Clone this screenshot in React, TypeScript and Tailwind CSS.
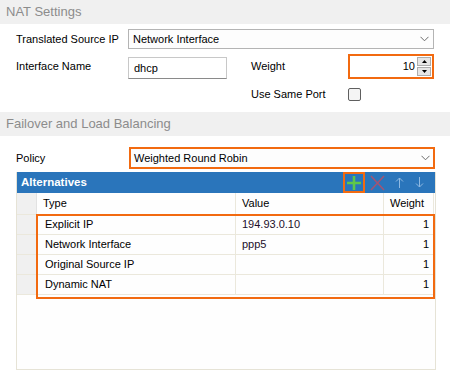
import React from "react";

const rows = [
  { type: "Explicit IP", value: "194.93.0.10", weight: "1" },
  { type: "Network Interface", value: "ppp5", weight: "1" },
  { type: "Original Source IP", value: "", weight: "1" },
  { type: "Dynamic NAT", value: "", weight: "1" },
];

function Chevron() {
  return (
    <svg width="9" height="6" viewBox="0 0 9 6" className="shrink-0">
      <path d="M0.5 0.8 L4.5 4.8 L8.5 0.8" fill="none" stroke="#6b6b6b" strokeWidth="1" />
    </svg>
  );
}

function SectionHeader({ title }: { title: string }) {
  return (
    <div className="h-[24px] bg-[#f0f0f0] flex items-center pl-[6px] text-[13px] text-[#8c8c8c]">
      {title}
    </div>
  );
}

export default function App() {
  return (
    <div
      className="w-[450px] h-[374px] bg-white overflow-hidden text-[11px] text-black"
      style={{ fontFamily: '"Liberation Sans", Arial, sans-serif' }}
    >
      <SectionHeader title="NAT Settings" />

      {/* Translated source */}
      <div className="flex items-center h-[20px] mt-[5px]">
        <div className="w-[128px] pl-[16px]">Translated Source IP</div>
        <div className="w-[306px] h-[20px] border border-[#b4b4b4] bg-[#fdfdfd] flex items-center justify-between pl-[4px] pr-[4px]">
          <span>Network Interface</span>
          <Chevron />
        </div>
      </div>

      {/* Interface name + weight */}
      <div className="flex items-center h-[25px] mt-[5px]">
        <div className="w-[128px] pl-[16px]">Interface Name</div>
        <div className="w-[99px] h-[22px] border border-[#c8c8c8] border-b-[#8a8a8a] bg-white flex items-center pl-[5px] mt-[3px]">
          dhcp
        </div>
        <div className="w-[121px] pl-[24px]">Weight</div>
        <div className="w-[86px] h-[25px] border-2 border-[#f26a10] bg-white flex items-center justify-end pr-[1px]">
          <span className="mr-[2px]">10</span>
          <div className="flex flex-col gap-[1px]">
            <div className="w-[14px] h-[9px] bg-[#e6e6e6] border border-[#adadad] flex items-center justify-center">
              <svg width="5" height="3" viewBox="0 0 5 3"><path d="M2.5 0 L5 3 L0 3 Z" fill="#000" /></svg>
            </div>
            <div className="w-[14px] h-[9px] bg-[#e6e6e6] border border-[#adadad] flex items-center justify-center">
              <svg width="5" height="3" viewBox="0 0 5 3"><path d="M0 0 L5 0 L2.5 3 Z" fill="#000" /></svg>
            </div>
          </div>
        </div>
      </div>

      {/* Use same port */}
      <div className="flex items-center h-[14px] mt-[8px]">
        <div className="w-[251px]" />
        <div className="w-[97px]">Use Same Port</div>
        <div className="w-[13px] h-[13px] rounded-[2px] border border-[#5f5f5f] bg-[#f4f4f4]" />
      </div>

      <div className="h-[11px]" />
      <SectionHeader title="Failover and Load Balancing" />

      {/* Policy */}
      <div className="flex items-center h-[22px] mt-[11px]">
        <div className="w-[129px] pl-[16px]">Policy</div>
        <div className="w-[306px] h-[22px] border-2 border-[#f26a10] bg-[#fdfdfd] flex items-center justify-between pl-[3px] pr-[3px]">
          <span>Weighted Round Robin</span>
          <Chevron />
        </div>
      </div>

      {/* Alternatives panel */}
      <div className="ml-[16px] w-[420px] h-[198px] mt-[3px] border border-[#e6e3d6] border-t-0 flex flex-col">
        <div className="h-[21px] bg-[#2a75bb] flex items-center justify-between pl-[4px] pr-[6px]">
          <span className="text-white font-bold text-[11.5px]">Alternatives</span>
          <div className="flex items-center h-full">
            <div className="w-[22px] h-[21px] border-2 border-[#f26a10] flex items-center justify-center">
              <svg width="16" height="16" viewBox="0 0 16 16">
                <path d="M8 1 V15 M1 8 H15" stroke="#5fc748" strokeWidth="2.6" />
              </svg>
            </div>
            <div className="w-[24px] flex items-center justify-center">
              <svg width="17" height="16" viewBox="0 0 17 16">
                <path d="M2 1 L15 15 M15 1 L2 15" stroke="#c94a5c" strokeOpacity="0.75" strokeWidth="1.6" />
              </svg>
            </div>
            <div className="w-[20px] flex items-center justify-center">
              <svg width="9" height="11" viewBox="0 0 9 11">
                <path d="M4.5 1 V11 M1 4.5 L4.5 1 L8 4.5" fill="none" stroke="#8fb9e2" strokeWidth="1" />
              </svg>
            </div>
            <div className="w-[20px] flex items-center justify-center">
              <svg width="9" height="11" viewBox="0 0 9 11">
                <path d="M4.5 0 V10 M1 6.5 L4.5 10 L8 6.5" fill="none" stroke="#8fb9e2" strokeWidth="1" />
              </svg>
            </div>
          </div>
        </div>

        <div className="relative flex-1 bg-[#fefefe]">
          {/* header row */}
          <div className="flex h-[22px] border-b border-[#ebe8dc]">
            <div className="w-[20px] bg-[#f0f0f0] border-r border-[#e2e2e2]" />
            <div className="w-[199px] pl-[6px] flex items-center border-r border-[#ebe8dc]">Type</div>
            <div className="w-[148px] pl-[6px] flex items-center border-r border-[#ebe8dc]">Value</div>
            <div className="w-[50px] pl-[6px] flex items-center border-r border-[#ebe8dc]">Weight</div>
          </div>
          {rows.map((r) => (
            <div key={r.type} className="flex h-[20px] border-b border-[#ebe8dc]">
              <div className="w-[20px] bg-[#f0f0f0] border-r border-[#e2e2e2]" />
              <div className="w-[199px] pl-[8px] flex items-center border-r border-[#ebe8dc]">{r.type}</div>
              <div className="w-[148px] pl-[6px] flex items-center border-r border-[#ebe8dc] text-[#1d0f2a]">{r.value}</div>
              <div className="w-[50px] pr-[4px] flex items-center justify-end border-r border-[#ebe8dc]">{r.weight}</div>
            </div>
          ))}
          {/* highlight around data rows */}
          <div className="absolute left-[19px] top-[21px] w-[399px] h-[85px] border-2 border-[#f26a10] pointer-events-none" />
        </div>
      </div>
    </div>
  );
}
